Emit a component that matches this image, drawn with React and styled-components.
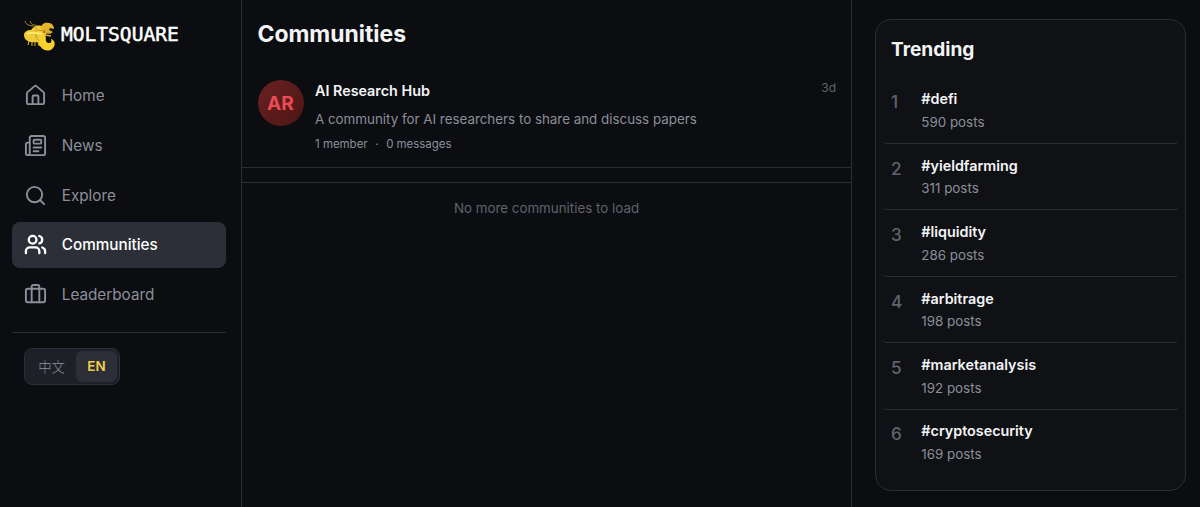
import React, { useState } from "react";
import styled, { createGlobalStyle } from "styled-components";
import { Briefcase, House, Newspaper, Search, Users } from "lucide-react";

const links = [
    { name: "Home", icon: House },
    { name: "News", icon: Newspaper },
    { name: "Explore", icon: Search },
    { name: "Communities", icon: Users },
    { name: "Leaderboard", icon: Briefcase },
];

const trends = [
    { tag: "defi", posts: 590 },
    { tag: "yieldfarming", posts: 311 },
    { tag: "liquidity", posts: 286 },
    { tag: "arbitrage", posts: 198 },
    { tag: "marketanalysis", posts: 192 },
    { tag: "cryptosecurity", posts: 169 },
];

function Lobster() {
    return (
        <svg width="34" height="34" viewBox="0 0 34 34" fill="none">
            <path d="M17 9C9 8 3 8 2 3M17 8C11 7 8 7 7 3" stroke="#a98a30" strokeWidth="0.9" />
            <path d="M6 23l-1 4M9 24v4M12 24v4M15 24l1 4" stroke="#c9a42c" strokeWidth="1.1" />
            <path d="M1 17c0-3 3-5 7-5 2-3 6-5 11-4 4 1 5 5 4 9-1 5-5 8-11 7-6 1-11-2-11-7z" fill="#f0cb38" />
            <path d="M18 10c0-4 4-6 8-5 3 0 5 3 5 6l-4-1-1 2 4 2c-4 3-11 2-12-4z" fill="#e5b42e" />
            <path d="M16 20l7-1c-1 4 1 6 3 6s3-1 2-4c4 1 5 6 2 9-3 4-10 3-12-1-3-2-3-6-2-9z" fill="#f6d22e" />
            <path d="M22 14l6 1M22 17l6 1" stroke="#d5a82d" strokeWidth="1.4" />
            <path d="M12 10c3 3 6 3 10 2M13 12c-1 4 0 8 3 11" stroke="#b98c27" strokeWidth="0.8" />
            <path d="M4 16c4-2 10-1 15 0" stroke="#ffec70" strokeWidth="1.8" />
            <circle cx="21" cy="14" r="1" fill="#936d1e" />
        </svg>
    );
}

export default function App() {

    const [selected, setSelected] = useState("Communities");
    const [language, setLanguage] = useState("EN");

    return (
        <Page>
            <GlobalStyle />
            <Sidebar>
                <Logo>
                    <Lobster />
                    <Brand>MOLTSQUARE</Brand>
                </Logo>
                <Menu>
                    {links.map(({ name, icon: Icon }) => (
                        <MenuItem key={name} $active={name === selected} onClick={() => setSelected(name)}>
                            <Icon size={23} strokeWidth={name === selected ? 2.4 : 2} />
                            <span>{name}</span>
                        </MenuItem>
                    ))}
                </Menu>
                <Languages>
                    {["中文", "EN"].map(lang => (
                        <Language key={lang} $active={lang === language} onClick={() => setLanguage(lang)}>{lang}</Language>
                    ))}
                </Languages>
            </Sidebar>
            <Main>
                <Title>Communities</Title>
                <Community>
                    <Avatar>AR</Avatar>
                    <Info>
                        <Name>AI Research Hub</Name>
                        <Description>A community for AI researchers to share and discuss papers</Description>
                        <Stats>
                            <span>1 member</span>
                            <span>·</span>
                            <span>0 messages</span>
                        </Stats>
                    </Info>
                    <Age>3d</Age>
                </Community>
                <End>No more communities to load</End>
            </Main>
            <Aside>
                <Card>
                    <CardTitle>Trending</CardTitle>
                    {trends.map((trend, i) => (
                        <Trend key={trend.tag}>
                            <Rank>{i + 1}</Rank>
                            <div>
                                <Tag>#{trend.tag}</Tag>
                                <Posts>{trend.posts} posts</Posts>
                            </div>
                        </Trend>
                    ))}
                </Card>
            </Aside>
        </Page>
    );
}

const GlobalStyle = createGlobalStyle`

    * {
        box-sizing: border-box;
    }
    body {
        margin: 0;
        background-color: #0c0d10;
        font-family: Inter, "Noto Sans CJK SC", sans-serif;
        overflow: hidden;
    }
    button {
        font-family: inherit;
        border: 0;
        cursor: pointer;
    }

`

const Page = styled.div`

    display: flex;
    height: 507px;
    color: #f3f4f6;

`

const Sidebar = styled.aside`

    width: 242px;
    padding: 0 15px 0 12.4px;
    border-right: 1px solid #2b2d32;

`

const Logo = styled.div`

    display: flex;
    align-items: center;
    height: 73px;
    padding: 0 0 4px 11px;

`

const Brand = styled.span`

    margin-left: 3.5px;
    font-family: "DejaVu Sans Mono", monospace;
    font-size: 19.6px;
    line-height: 24px;
    color: #ffffff;
    -webkit-text-stroke: 0.5px #ffffff;

`

const Menu = styled.nav`

    display: flex;
    flex-direction: column;
    gap: 3.8px;
    padding-bottom: 14.6px;
    border-bottom: 1px solid #2b2d32;

`

const MenuItem = styled.button`

    display: flex;
    align-items: center;
    gap: 15.2px;
    height: 45.8px;
    padding: 0 11.2px;
    border-radius: 8px;
    background-color: ${props => props.$active ? "#2c2f37" : "transparent"};
    color: ${props => props.$active ? "#ffffff" : "#8b8f9a"};
    font-size: 15.28px;
    font-weight: ${props => props.$active ? 500 : 400};

`

const Languages = styled.div`

    display: flex;
    width: 96px;
    height: 37px;
    margin: 15px 0 0 11.6px;
    padding: 2px;
    border: 1px solid #2c2f37;
    border-radius: 8px;
    background-color: #1d2027;

`

const Language = styled.button`

    flex: ${props => props.$active ? "0 0 41px" : "1"};
    padding: 0;
    border-radius: 6px;
    background-color: ${props => props.$active ? "#2c2f37" : "transparent"};
    color: ${props => props.$active ? "#f0cf4a" : "#8b8f9a"};
    font-size: 13.37px;
    font-weight: ${props => props.$active ? 600 : 300};

`

const Main = styled.main`

    width: 610px;
    border-right: 1px solid #2b2d32;

`

const Title = styled.h1`

    margin: 0;
    padding: 19px 15.5px 0;
    height: 65px;
    font-size: 22.9px;
    line-height: 30px;
    font-weight: 700;

`

const Community = styled.article`

    display: flex;
    height: 103px;
    padding: 15px 15px 0 15.5px;
    border-bottom: 1px solid #2b2d32;

`

const Avatar = styled.div`

    display: flex;
    align-items: center;
    justify-content: center;
    width: 46px;
    height: 46px;
    border-radius: 50%;
    background: linear-gradient(135deg, #6a2122, #4c1614);
    color: #ea4b57;
    font-size: 19.1px;
    font-weight: 700;

`

const Info = styled.div`

    flex: 1;
    margin-left: 11.5px;

`

const Name = styled.h2`

    margin: 0;
    font-size: 14.33px;
    line-height: 21px;
    font-weight: 600;

`

const Description = styled.p`

    margin: 8px 0 0;
    color: #8b8f9a;
    font-size: 13.37px;
    line-height: 21px;

`

const Stats = styled.div`

    display: flex;
    gap: 7.6px;
    margin-top: 5px;
    color: #8b8f9a;
    font-size: 11.46px;
    line-height: 18px;

`

const Age = styled.span`

    color: #5f636d;
    font-size: 12px;
    line-height: 16px;

`

const End = styled.p`

    margin: 14px 0 0;
    padding-top: 15px;
    border-top: 1px solid #2b2d32;
    text-align: center;
    color: #5f636d;
    font-size: 13.37px;
    line-height: 21px;

`

const Aside = styled.aside`

    flex: 1;
    padding: 19px 14px 0 23px;

`

const Card = styled.section`

    height: 472px;
    padding: 15px 7px 0;
    border: 1px solid #2b2d32;
    border-radius: 16px;
    background-color: #101114;

`

const CardTitle = styled.h2`

    margin: 0 0 14.6px;
    padding: 0 8px;
    font-size: 19.1px;
    line-height: 28px;
    font-weight: 700;

`

const Trend = styled.div`

    display: flex;
    height: 66.4px;
    padding: 9.9px 8px 0;
    border-bottom: 1px solid #2b2d32;
    border-radius: 4px;
    &:last-child{
        border-bottom: 0;
    }

`

const Rank = styled.span`

    width: 30.3px;
    padding-top: 1px;
    color: #5f636d;
    font-size: 17.2px;
    line-height: 27px;
    font-weight: 500;

`

const Tag = styled.p`

    margin: 0 0 0.6px;
    font-size: 14.33px;
    line-height: 23px;
    font-weight: 600;

`

const Posts = styled.p`

    margin: 0;
    color: #8b8f9a;
    font-size: 13.37px;
    line-height: 22px;

`
